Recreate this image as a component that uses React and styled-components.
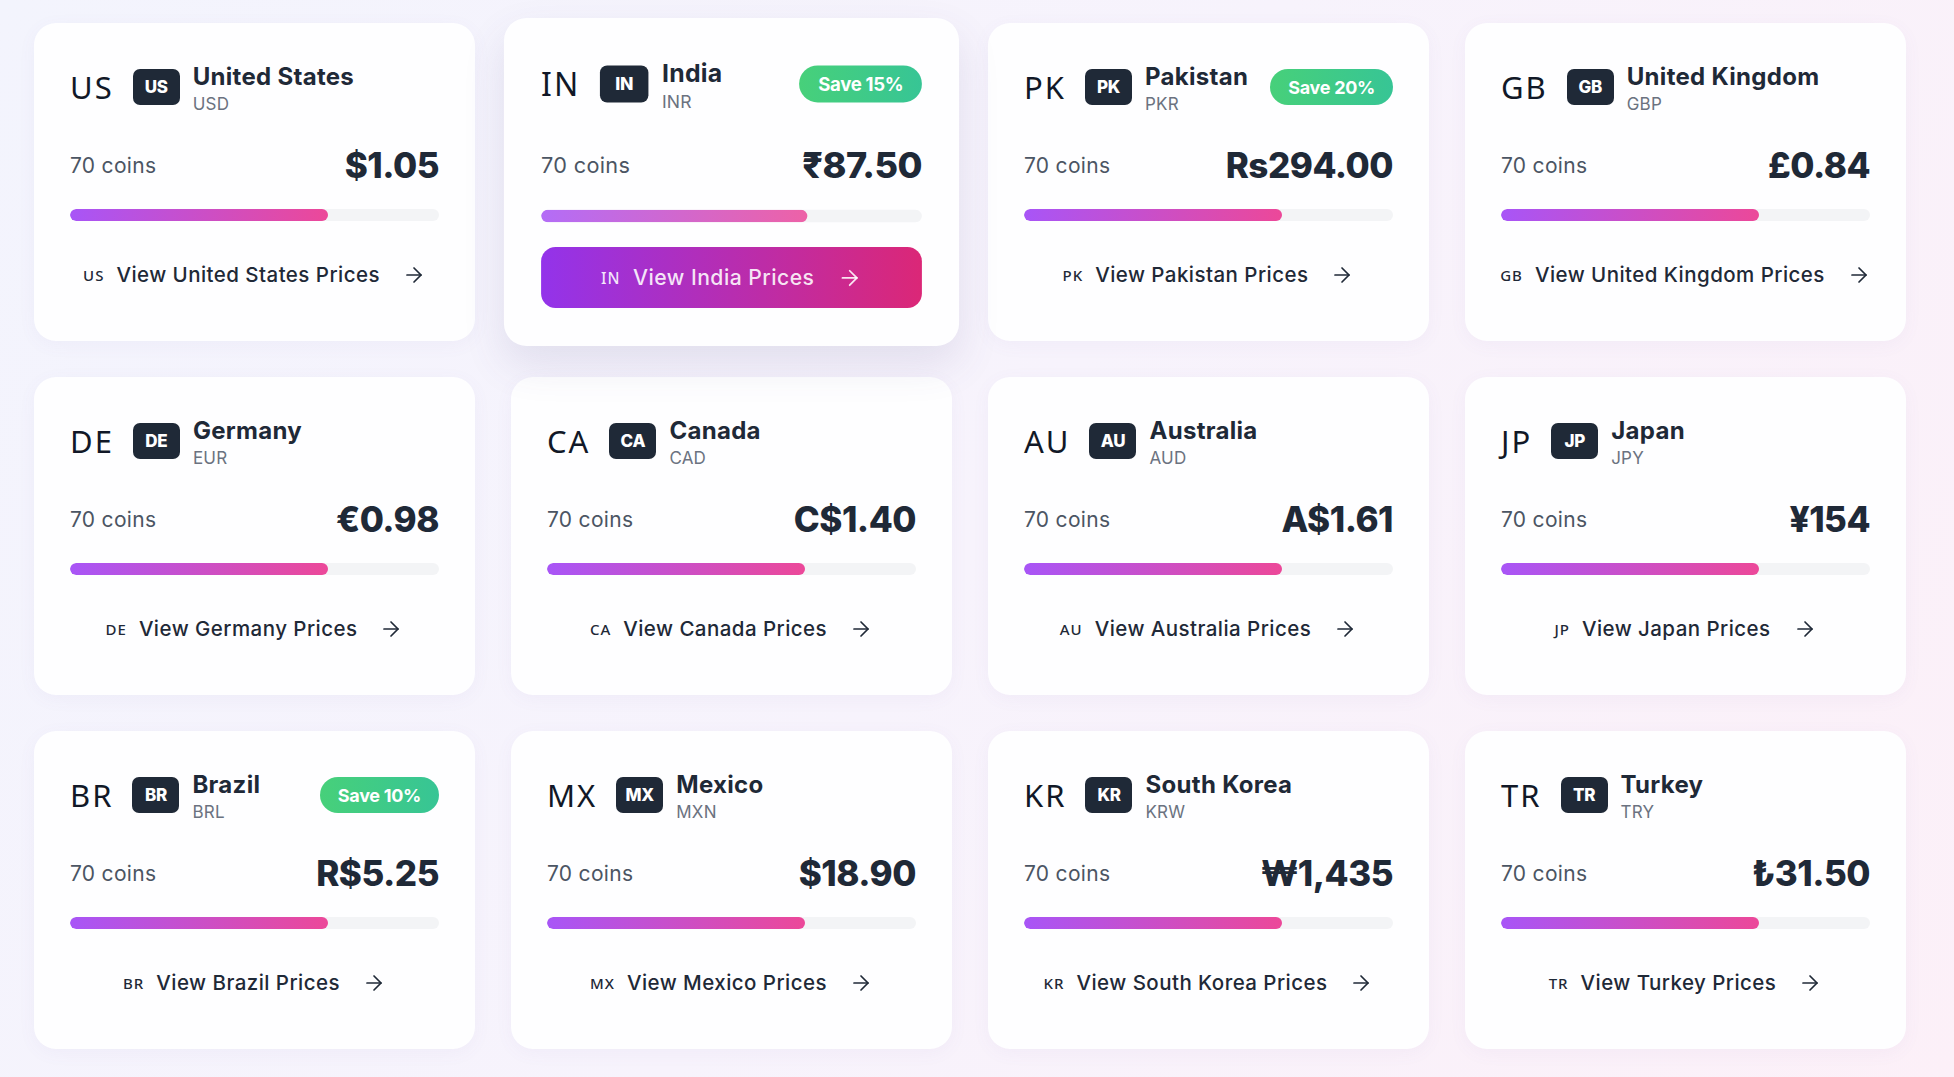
import styled, { createGlobalStyle, css } from "styled-components";
import { ArrowRight } from "lucide-react";

const countries = [
  { code: "US", name: "United States", cur: "USD", price: "$1.05" },
  { code: "IN", name: "India", cur: "INR", price: "₹87.50", save: 15, active: true },
  { code: "PK", name: "Pakistan", cur: "PKR", price: "Rs294.00", save: 20 },
  { code: "GB", name: "United Kingdom", cur: "GBP", price: "£0.84" },
  { code: "DE", name: "Germany", cur: "EUR", price: "€0.98" },
  { code: "CA", name: "Canada", cur: "CAD", price: "C$1.40" },
  { code: "AU", name: "Australia", cur: "AUD", price: "A$1.61" },
  { code: "JP", name: "Japan", cur: "JPY", price: "¥154" },
  { code: "BR", name: "Brazil", cur: "BRL", price: "R$5.25", save: 10 },
  { code: "MX", name: "Mexico", cur: "MXN", price: "$18.90" },
  { code: "KR", name: "South Korea", cur: "KRW", price: "₩1,435" },
  { code: "TR", name: "Turkey", cur: "TRY", price: "₺31.50" },
];

const App = () => {
  return (
    <>
      <GlobalStyle />
      <Page>
        <Grid>
          {countries.map((c) => (
            <Card key={c.code} $active={c.active}>
              <Header>
                <Who>
                  <Flag>{c.code}</Flag>
                  <CodeBox>{c.code}</CodeBox>
                  <Names>
                    <Name>{c.name}</Name>
                    <Currency>{c.cur}</Currency>
                  </Names>
                </Who>
                {c.save && <Save>Save {c.save}%</Save>}
              </Header>
              <PriceRow>
                <Coins>70 coins</Coins>
                <Price>{c.price}</Price>
              </PriceRow>
              <Track>
                <Fill $active={c.active} style={{ width: "70%" }} />
              </Track>
              <ViewButton $active={c.active}>
                <SmallFlag>{c.code}</SmallFlag>
                <Label>View {c.name} Prices</Label>
                <Arrow>
                  <ArrowRight size={24} strokeWidth={1.7} />
                </Arrow>
              </ViewButton>
            </Card>
          ))}
        </Grid>
      </Page>
    </>
  );
};

export default App;

const GlobalStyle = createGlobalStyle`
  html, body {
    margin: 0;
    padding: 0;
  }
  body {
    font-family: Inter, "Noto Sans", sans-serif;
    color: #1f2937;
    background: #f6f3fc;
  }
`;

const Page = styled.div`
  min-height: 1077px;
  box-sizing: border-box;
  padding: 23px 48px 0 34px;
  background: linear-gradient(120deg, #f3f4fd 0%, #f7f3fc 50%, #fcf0f8 100%);
`;

const Grid = styled.div`
  display: grid;
  grid-template-columns: repeat(4, 441px);
  gap: 36px;
`;

const Card = styled.div`
  box-sizing: border-box;
  height: 318px;
  padding: 36px;
  background: #fefeff;
  border-radius: 22px;
  box-shadow: 0 4px 18px rgba(110, 90, 180, 0.05);
  display: flex;
  flex-direction: column;
  ${(p) =>
    p.$active &&
    css`
      transform: scale(1.032);
      box-shadow: 0 18px 40px rgba(80, 70, 130, 0.12);
    `}
`;

const Header = styled.div`
  display: flex;
  align-items: center;
  justify-content: space-between;
  height: 56px;
  margin-bottom: 28px;
`;

const Who = styled.div`
  display: flex;
  align-items: center;
  gap: 13px;
`;

const Flag = styled.span`
  font-family: "Noto Sans", sans-serif;
  font-size: 31px;
  letter-spacing: 2px;
  color: #111827;
  margin-right: 6px;
  line-height: 1;
`;

const CodeBox = styled.span`
  display: inline-flex;
  align-items: center;
  justify-content: center;
  min-width: 47px;
  height: 36px;
  padding: 0 8px;
  box-sizing: border-box;
  border-radius: 7px;
  background: #1f2937;
  color: #fff;
  font-size: 17px;
  font-weight: 800;
  letter-spacing: -0.3px;
`;

const Names = styled.div`
  display: flex;
  flex-direction: column;
  margin-top: 4px;
`;

const Name = styled.span`
  font-size: 24px;
  line-height: 30px;
  font-weight: 700;
  color: #1f2937;
  letter-spacing: 0.3px;
  white-space: nowrap;
`;

const Currency = styled.span`
  font-size: 17px;
  line-height: 24px;
  color: #6b7280;
  letter-spacing: 0.2px;
`;

const Save = styled.span`
  display: inline-flex;
  align-items: center;
  height: 36px;
  padding: 0 18px;
  border-radius: 999px;
  background: linear-gradient(90deg, #47d07a, #37c595);
  color: #fff;
  font-size: 18px;
  font-weight: 700;
  letter-spacing: -0.3px;
  white-space: nowrap;
`;

const PriceRow = styled.div`
  display: flex;
  align-items: center;
  justify-content: space-between;
  height: 44px;
  margin-bottom: 22px;
`;

const Coins = styled.span`
  font-size: 21px;
  color: #4b5563;
  letter-spacing: 0.3px;
`;

const Price = styled.span`
  font-size: 35px;
  font-weight: 800;
  color: #1f2937;
  letter-spacing: -0.5px;
`;

const Track = styled.div`
  height: 12px;
  border-radius: 999px;
  background: #f3f4f6;
  overflow: hidden;
`;

const Fill = styled.div`
  height: 100%;
  border-radius: 999px;
  background: linear-gradient(90deg, #a855f7, #ec4899);
  opacity: ${(p) => (p.$active ? 0.85 : 1)};
`;

const ViewButton = styled.div`
  margin-top: 24px;
  height: 59px;
  border-radius: 14px;
  display: flex;
  align-items: center;
  justify-content: center;
  gap: 12px;
  font-size: 20.5px;
  font-weight: 500;
  letter-spacing: 0.45px;
  color: #1f2937;
  white-space: nowrap;
  ${(p) =>
    p.$active &&
    css`
      background: linear-gradient(90deg, #9333ea, #db2777);
      color: rgba(255, 255, 255, 0.88);
    `}
`;

const Label = styled.span`
  flex-shrink: 0;
`;

const SmallFlag = styled.span`
  font-family: "Noto Sans", sans-serif;
  font-size: 15px;
  font-weight: 500;
  letter-spacing: 1px;
  flex-shrink: 0;
`;

const Arrow = styled.span`
  display: inline-flex;
  margin-left: 10px;
  flex-shrink: 0;
`;
